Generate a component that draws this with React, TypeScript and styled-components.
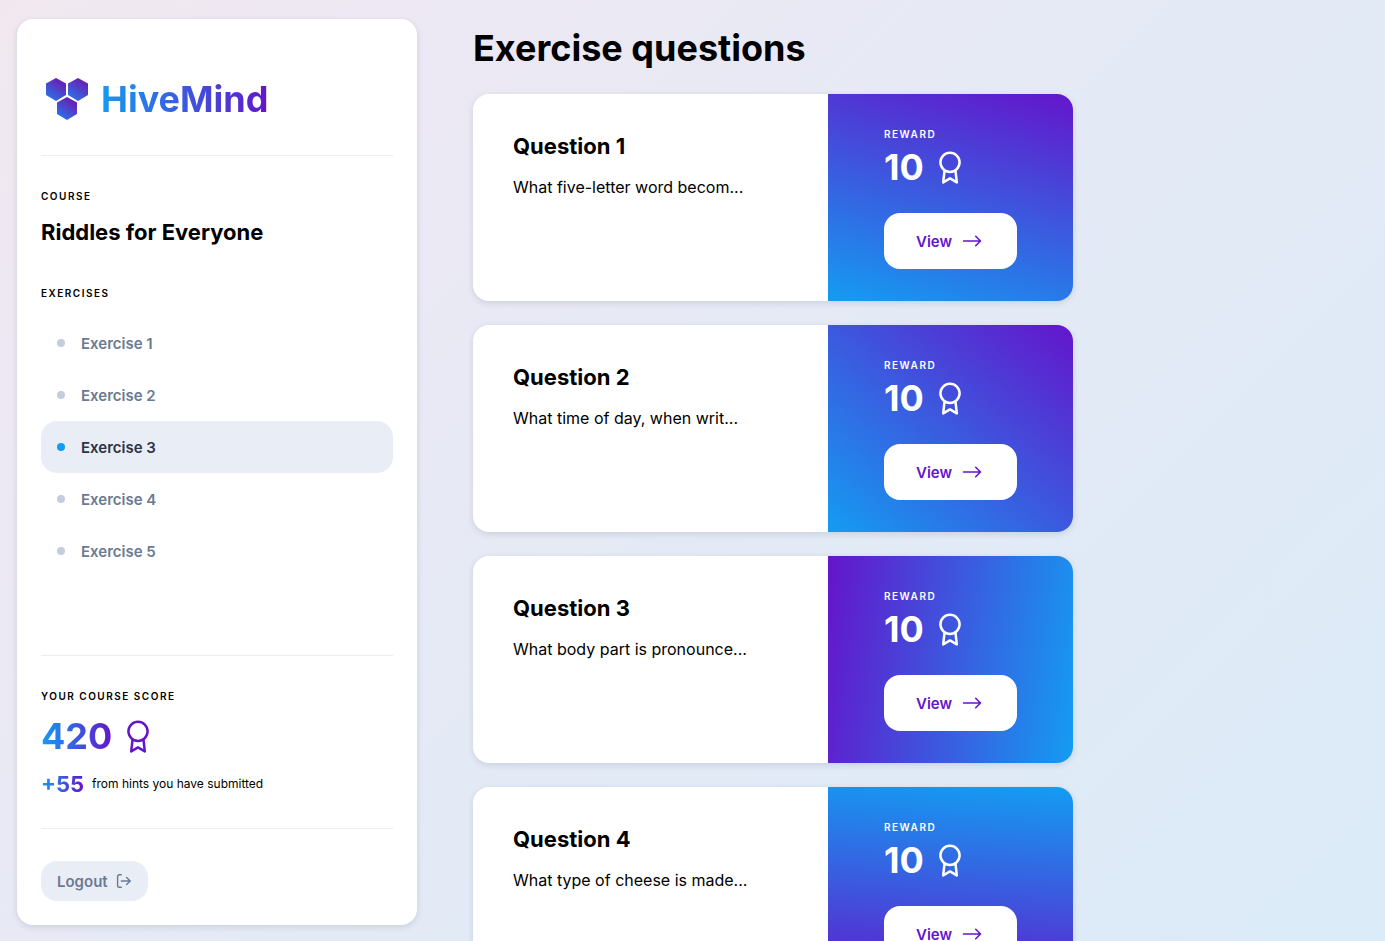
import React from "react";
import styled, { createGlobalStyle } from "styled-components";

const BLUE = "#149cf2";
const PURPLE = "#6415cb";

const GlobalStyle = createGlobalStyle`
  *, *::before, *::after { box-sizing: border-box; }
  body {
    margin: 0;
    font-family: Inter, "Liberation Sans", sans-serif;
    font-size: 16px;
    line-height: 24px;
    color: #000;
  }
  h1, h2, h3, p, ul { margin: 0; padding: 0; }
`;

const Page = styled.div`
  display: flex;
  gap: 56px;
  height: 100vh;
  padding: 0 17px;
  background: linear-gradient(135deg, #f1e8ef 0%, #eee8f3 14%, #e4eaf5 52%, #dbebf8 100%);
`;

const Sidebar = styled.aside`
  display: flex;
  flex-direction: column;
  flex: 0 0 400px;
  margin: 19px 0 16px;
  padding: 56px 24px 24px;
  border-radius: 16px;
  background: #fff;
  box-shadow: 0 2px 6px rgba(40, 50, 90, 0.14);
`;

const Brand = styled.a`
  display: flex;
  align-items: center;
  gap: 12px;
  height: 48px;
  padding-left: 4px;
  text-decoration: none;
`;

const GradientText = styled.span<{ $size: number }>`
  font-size: ${(p) => p.$size}px;
  line-height: ${(p) => (p.$size > 30 ? 48 : 32)}px;
  font-weight: 700;
  color: transparent;
  background: linear-gradient(90deg, ${BLUE}, ${PURPLE});
  background-clip: text;
  -webkit-background-clip: text;
`;

const Divider = styled.hr`
  width: 100%;
  height: 1px;
  margin: 0;
  border: 0;
  background: #e9eef5;
`;

const CourseSection = styled.section`
  display: flex;
  flex-direction: column;
  padding-top: 32px;
  margin-top: 32px;
  border-top: 1px solid #e9eef5;
  gap: 12px;
`;

const Label = styled.p`
  font-size: 10px;
  line-height: 16px;
  font-weight: 600;
  letter-spacing: 1.5px;
  text-transform: uppercase;
`;

const Title = styled.h2`
  font-size: 22px;
  line-height: 32px;
  font-weight: 700;
`;

const ExerciseNav = styled.nav`
  flex: 1;
  display: flex;
  flex-direction: column;
  gap: 16px;
  padding-top: 37px;
`;

const ExerciseList = styled.ul`
  list-style: none;
`;

const ExerciseLink = styled.a<{ $active: boolean }>`
  display: flex;
  align-items: center;
  gap: 16px;
  height: 52px;
  padding: 0 16px;
  border-radius: 16px;
  font-size: 15px;
  line-height: 25px;
  font-weight: 600;
  text-decoration: none;
  color: ${(p) => (p.$active ? "#2b3346" : "#6b7a93")};
  background: ${(p) => (p.$active ? "#e9eef6" : "transparent")};

  &::before {
    content: "";
    width: 8px;
    height: 8px;
    border-radius: 50%;
    background: ${(p) => (p.$active ? BLUE : "#c4cedb")};
  }
`;

const ScoreSection = styled.section`
  display: flex;
  flex-direction: column;
  gap: 8px;
  padding: 32px 0 28px;
`;

const ScoreRow = styled.div<{ $gap: number }>`
  display: flex;
  align-items: center;
  gap: ${(p) => p.$gap}px;
  color: ${PURPLE};
`;

const HintText = styled.span`
  font-size: 12px;
  color: #000;
`;

const LogoutButton = styled.button`
  display: flex;
  align-items: center;
  align-self: flex-start;
  gap: 8px;
  height: 40px;
  margin-top: 32px;
  padding: 0 16px;
  border: 0;
  border-radius: 16px;
  background: #e9eef6;
  color: #6b7a93;
  font: 600 15px/25px Inter, "Liberation Sans", sans-serif;
  cursor: pointer;
`;

const Main = styled.main`
  flex: 1;
  min-width: 0;
  margin-left: -16px;
  padding: 24px 0 24px 16px;
  overflow-y: auto;
  scrollbar-width: none;
`;

const Heading = styled.h1`
  font-size: 36px;
  line-height: 48px;
  font-weight: 700;
`;

const Questions = styled.div`
  display: flex;
  flex-direction: column;
  gap: 24px;
  max-width: 600px;
  padding-top: 22px;
`;

const Card = styled.article`
  display: flex;
  border-radius: 16px;
  background: #fff;
  box-shadow: 0 2px 6px rgba(40, 50, 90, 0.14);
`;

const CardBody = styled.div`
  flex: 1;
  min-width: 0;
  display: flex;
  flex-direction: column;
  gap: 13px;
  padding: 36px 40px;
`;

const Reward = styled.div<{ $background: string }>`
  flex: 0 0 245px;
  padding: 32px 56px;
  border-radius: 0 16px 16px 0;
  background: ${(p) => p.$background};
  color: #fff;
`;

const RewardRow = styled.div`
  display: flex;
  align-items: center;
  gap: 10px;
  padding: 1px 0 22px;
`;

const RewardValue = styled.span`
  font-size: 36px;
  line-height: 48px;
  font-weight: 700;
`;

const ViewButton = styled.button`
  display: flex;
  align-items: center;
  gap: 8px;
  width: 100%;
  height: 56px;
  padding: 0 32px;
  border: 0;
  border-radius: 16px;
  background: #fff;
  color: ${PURPLE};
  font: 600 15px/25px Inter, "Liberation Sans", sans-serif;
  cursor: pointer;
`;

const Logo = () => (
  <svg width="44" height="44" viewBox="0 0 44 44" aria-hidden="true">
    <defs>
      <linearGradient id="cell" x1="0.2" y1="1" x2="0.8" y2="0">
        <stop offset="0" stopColor="#2778ea" />
        <stop offset="1" stopColor="#7212ae" />
      </linearGradient>
    </defs>
    {["translate(1 1)", "translate(23 1)", "translate(12 20)"].map((t) => (
      <path key={t} transform={t} d="M10 0 20 5.6V17L10 23 0 17V5.6Z" fill="url(#cell)" />
    ))}
  </svg>
);

const Medal = () => (
  <svg width="32" height="36" viewBox="0 0 32 36" fill="none" stroke="currentColor" strokeWidth="2.5" strokeLinecap="round" strokeLinejoin="round" aria-hidden="true">
    <circle cx="16" cy="13.3" r="9.6" />
    <path d="M10.5 21.8 9.2 33.4l6.8-4 6.8 4L21.5 21.8" />
  </svg>
);

const Arrow = () => (
  <svg width="24" height="24" viewBox="0 0 24 24" fill="none" stroke="currentColor" strokeWidth="1.6" strokeLinecap="round" strokeLinejoin="round" aria-hidden="true">
    <path d="M3.5 12h17M15.7 7.3l4.8 4.7-4.8 4.7" />
  </svg>
);

const LogoutIcon = () => (
  <svg width="16" height="16" viewBox="0 0 16 16" fill="none" stroke="currentColor" strokeWidth="1.4" strokeLinecap="round" strokeLinejoin="round" aria-hidden="true">
    <path d="M5.3 14.2H3.4Q1.6 14.2 1.6 12.4V3.6Q1.6 1.8 3.4 1.8h1.9M5.3 8h9M10.6 4.4 14.2 8l-3.6 3.6" />
  </svg>
);

const exercises = [1, 2, 3, 4, 5];

const questions = [
  { text: "What five-letter word becom...", background: `linear-gradient(16deg, ${BLUE}, ${PURPLE})` },
  { text: "What time of day, when writ...", background: `linear-gradient(40deg, ${BLUE}, ${PURPLE})` },
  { text: "What body part is pronounce...", background: `linear-gradient(98deg, ${PURPLE}, ${BLUE})` },
  { text: "What type of cheese is made...", background: `linear-gradient(184deg, ${BLUE}, ${PURPLE})` },
];

export default function App() {
  return (
    <>
      <GlobalStyle />
      <Page>
        <Sidebar>
          <Brand href="#">
            <Logo />
            <GradientText $size={36}>HiveMind</GradientText>
          </Brand>
          <CourseSection>
            <Label>Course</Label>
            <Title>Riddles for Everyone</Title>
          </CourseSection>
          <ExerciseNav aria-label="Exercises">
            <Label>Exercises</Label>
            <ExerciseList>
              {exercises.map((n) => (
                <li key={n}>
                  <ExerciseLink href="#" $active={n === 3}>Exercise {n}</ExerciseLink>
                </li>
              ))}
            </ExerciseList>
          </ExerciseNav>
          <Divider />
          <ScoreSection>
            <Label>Your course score</Label>
            <ScoreRow $gap={10}>
              <GradientText $size={36}>420</GradientText>
              <Medal />
            </ScoreRow>
            <ScoreRow $gap={8}>
              <GradientText $size={22}>+55</GradientText>
              <HintText>from hints you have submitted</HintText>
            </ScoreRow>
          </ScoreSection>
          <Divider />
          <LogoutButton type="button">
            Logout
            <LogoutIcon />
          </LogoutButton>
        </Sidebar>
        <Main>
          <Heading>Exercise questions</Heading>
          <Questions>
            {questions.map((q, i) => (
              <Card key={q.text}>
                <CardBody>
                  <Title>Question {i + 1}</Title>
                  <p>{q.text}</p>
                </CardBody>
                <Reward $background={q.background}>
                  <Label>Reward</Label>
                  <RewardRow>
                    <RewardValue>10</RewardValue>
                    <Medal />
                  </RewardRow>
                  <ViewButton type="button">
                    View
                    <Arrow />
                  </ViewButton>
                </Reward>
              </Card>
            ))}
          </Questions>
        </Main>
      </Page>
    </>
  );
}
